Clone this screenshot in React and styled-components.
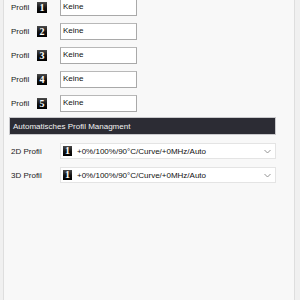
import React from 'react'
import styled, { createGlobalStyle } from 'styled-components'

const Global = createGlobalStyle`
  html, body {
    margin: 0;
    padding: 0;
    background: #f0f0f0;
  }
  body {
    font-family: "Liberation Sans", Arial, sans-serif;
  }
`

const Page = styled.div`
  width: 300px;
  height: 300px;
  padding: 0 5px 0 3px;
  box-sizing: border-box;
  overflow: hidden;
`

const Panel = styled.div`
  height: 100%;
  background: #f8f8f8;
  border-left: 1px solid #dedede;
  border-right: 1px solid #dedede;
  padding: 0 0 0 7px;
  display: flex;
  flex-direction: column;
`

const ProfileList = styled.div`
  display: flex;
  flex-direction: column;
  gap: 7px;
  margin-top: -1px;
`

const Row = styled.div`
  display: flex;
  align-items: center;
  height: ${({h}) => h || 17}px;
`

const Label = styled.span`
  width: ${({w}) => w || 26}px;
  font-size: 8px;
  color: #1a1a1a;
  flex-shrink: 0;
`

const Badge = styled.span`
  display: inline-flex;
  align-items: center;
  justify-content: center;
  width: ${({s}) => s || 10}px;
  height: ${({s}) => (s || 10) + 1}px;
  background: linear-gradient(180deg, #4a4a4a 0%, #111 55%, #000 100%);
  color: #fff;
  font-family: "Liberation Serif", "Times New Roman", serif;
  font-weight: bold;
  font-size: 10px;
  line-height: 1;
  flex-shrink: 0;
`

const TextBox = styled.div`
  margin-left: 13px;
  width: 77px;
  height: 17px;
  box-sizing: border-box;
  background: #fff;
  border: 1px solid #a9a9a9;
  border-top-color: #b8b8b8;
  font-size: 8px;
  color: #111;
  padding: 2px 0 0 2px;
`

const Header = styled.div`
  margin: 5px 0 0 -2px;
  width: 267px;
  height: 18px;
  box-sizing: border-box;
  background: #2c2c34;
  border: 1px solid #c9c9cc;
  color: #f2f2f2;
  font-size: 8px;
  display: flex;
  align-items: center;
  padding-left: 3px;
`

const SelectList = styled.div`
  display: flex;
  flex-direction: column;
  gap: 8px;
  margin-top: 8px;
`

const Select = styled.div`
  width: 216px;
  height: 16px;
  box-sizing: border-box;
  background: #fff;
  border: 1px solid #e4e4e4;
  display: flex;
  align-items: center;
  padding: 0 4px 0 2px;
  font-size: 8px;
  color: #111;
`

const SelectText = styled.span`
  margin-left: 5px;
  flex: 1;
`

const Chevron = () => (
  <svg width="7" height="5" viewBox="0 0 7 5">
    <polyline points="0.5,1 3.5,4 6.5,1" fill="none" stroke="#888" strokeWidth="0.9" />
  </svg>
)

const profiles = [1, 2, 3, 4, 5]
const modes = ['2D Profil', '3D Profil']

const App = () => {
  return (
    <Page>
      <Global />
      <Panel>
        <ProfileList>
          {profiles.map(n => (
            <Row key={n}>
              <Label>Profil</Label>
              <Badge>{n}</Badge>
              <TextBox>Keine</TextBox>
            </Row>
          ))}
        </ProfileList>
        <Header>Automatisches Profil Managment</Header>
        <SelectList>
          {modes.map(m => (
            <Row key={m} h={16}>
              <Label w={49}>{m}</Label>
              <Select>
                <Badge s={9}>1</Badge>
                <SelectText>+0%/100%/90°C/Curve/+0MHz/Auto</SelectText>
                <Chevron />
              </Select>
            </Row>
          ))}
        </SelectList>
      </Panel>
    </Page>
  )
}

export default App
